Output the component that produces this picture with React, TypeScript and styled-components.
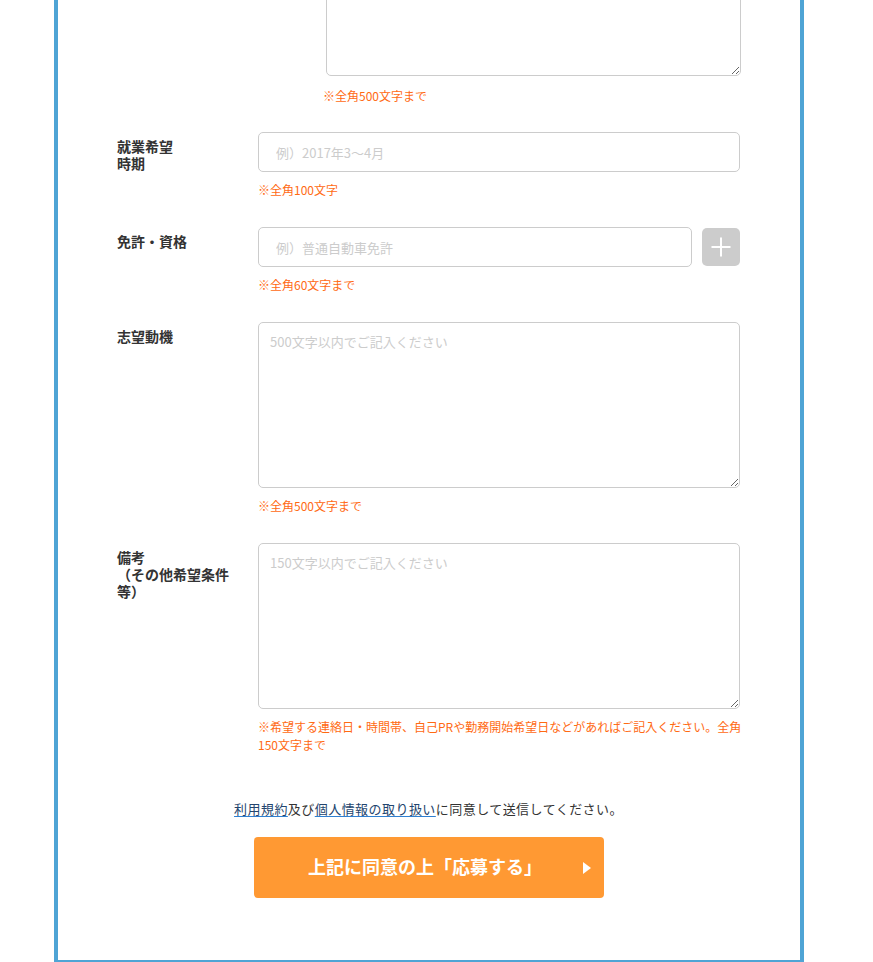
import React from "react";
import styled, { createGlobalStyle } from "styled-components";

const Global = createGlobalStyle`
  html, body {
    margin: 0;
    padding: 0;
    background: #ffffff;
  }
  body {
    font-family: "Noto Sans CJK JP", "Noto Sans", sans-serif;
    color: #333333;
  }
  * { box-sizing: border-box; }
`;

const Page = styled.div`
  width: 873px;
  overflow: hidden;
`;

const Frame = styled.form`
  width: 750px;
  margin: -120px 0 0 54px;
  border: 4px solid #4fa4d5;
  border-top: none;
  padding: 20px 60px 62px 59px;
  display: flex;
  flex-direction: column;
  gap: 28px;
`;

const Indented = styled.div`
  padding-left: 209px;
  margin-right: -1px;
  margin-bottom: -1px;
`;

const Row = styled.div`
  display: grid;
  grid-template-columns: 141px 1fr;
`;

const Label = styled.div`
  max-width: 120px;
  padding-top: 6px;
  font-size: 14px;
  line-height: 17px;
  font-weight: 700;
  color: #333333;
`;

const Field = styled.div`
  display: flex;
  flex-direction: column;
  min-width: 0;
`;

const InputLine = styled.div`
  display: flex;
  align-items: center;
  gap: 10px;
`;

const TextInput = styled.input`
  flex: 1;
  min-width: 0;
  height: 40px;
  padding: 0 17px;
  border: 1px solid #cccccc;
  border-radius: 5px;
  font-family: inherit;
  font-size: 13px;
  color: #333333;
  background: #ffffff;
  outline: none;
  &::placeholder { color: #cccccc; }
`;

const TextArea = styled.textarea<{ $height: number }>`
  display: block;
  width: 100%;
  height: ${(p) => p.$height}px;
  padding: 10px 11px;
  border: 1px solid #cccccc;
  border-radius: 5px;
  font-family: inherit;
  font-size: 13px;
  line-height: 18px;
  color: #333333;
  background: #ffffff;
  resize: vertical;
  outline: none;
  &::placeholder { color: #cccccc; }
`;

const AddButton = styled.button`
  position: relative;
  flex: none;
  width: 38px;
  height: 38px;
  border: none;
  border-radius: 5px;
  background: #cccccc;
  padding: 0;
  cursor: pointer;
  &::before, &::after {
    content: "";
    position: absolute;
    left: 50%;
    top: 50%;
    background: #ffffff;
    transform: translate(-50%, -50%);
  }
  &::before { width: 19px; height: 2px; }
  &::after { width: 2px; height: 19px; }
`;

const Note = styled.p<{ $shift?: number; $gap?: number }>`
  margin: ${(p) => p.$gap ?? 9}px 0 0 ${(p) => p.$shift ?? 0}px;
  font-size: 12px;
  line-height: 18px;
  color: #ff6a13;
  white-space: nowrap;
`;

const Consent = styled.p`
  margin: 18px 0 0;
  text-align: center;
  font-size: 13px;
  line-height: 18px;
  letter-spacing: 0.45px;
  color: #333333;
`;

const TermsLink = styled.a`
  color: #23456e;
  text-decoration: underline;
  text-decoration-color: #2f7fd0;
  text-underline-offset: 2px;
`;

const SubmitButton = styled.button`
  position: relative;
  align-self: center;
  width: 350px;
  height: 61px;
  margin-top: -9px;
  border: none;
  border-radius: 4px;
  background: #ff9933;
  color: #ffffff;
  font-family: inherit;
  font-size: 18px;
  font-weight: 700;
  padding: 0 7px 4px 0;
  cursor: pointer;
  &::after {
    content: "";
    position: absolute;
    right: 13px;
    top: 50%;
    transform: translateY(-50%);
    border-left: 8px solid #ffffff;
    border-top: 6px solid transparent;
    border-bottom: 6px solid transparent;
  }
`;

type Area = { label: React.ReactNode; placeholder: string; note: React.ReactNode };

const areas: Area[] = [
  {
    label: "志望動機",
    placeholder: "500文字以内でご記入ください",
    note: "※全角500文字まで",
  },
  {
    label: (
      <>
        備考
        <br />
        （その他希望条件等）
      </>
    ),
    placeholder: "150文字以内でご記入ください",
    note: (
      <>
        ※希望する連絡日・時間帯、自己PRや勤務開始希望日などがあればご記入ください。全角
        <br />
        150文字まで
      </>
    ),
  },
];

export default function App() {
  return (
    <Page>
      <Global />
      <Frame onSubmit={(e) => e.preventDefault()}>
        <Indented>
          <TextArea $height={176} />
          <Note $shift={-3} $gap={11}>
            ※全角500文字まで
          </Note>
        </Indented>

        <Row>
          <Label>
            就業希望
            <br />
            時期
          </Label>
          <Field>
            <InputLine>
              <TextInput placeholder="例）2017年3～4月" />
            </InputLine>
            <Note>※全角100文字</Note>
          </Field>
        </Row>

        <Row>
          <Label>免許・資格</Label>
          <Field>
            <InputLine>
              <TextInput placeholder="例）普通自動車免許" />
              <AddButton type="button" aria-label="追加" />
            </InputLine>
            <Note>※全角60文字まで</Note>
          </Field>
        </Row>

        {areas.map((a, i) => (
          <Row key={i}>
            <Label>{a.label}</Label>
            <Field>
              <TextArea $height={166} placeholder={a.placeholder} />
              <Note>{a.note}</Note>
            </Field>
          </Row>
        ))}

        <Consent>
          <TermsLink href="#">利用規約</TermsLink>及び
          <TermsLink href="#">個人情報の取り扱い</TermsLink>
          に同意して送信してください。
        </Consent>

        <SubmitButton type="submit">上記に同意の上「応募する」</SubmitButton>
      </Frame>
    </Page>
  );
}
